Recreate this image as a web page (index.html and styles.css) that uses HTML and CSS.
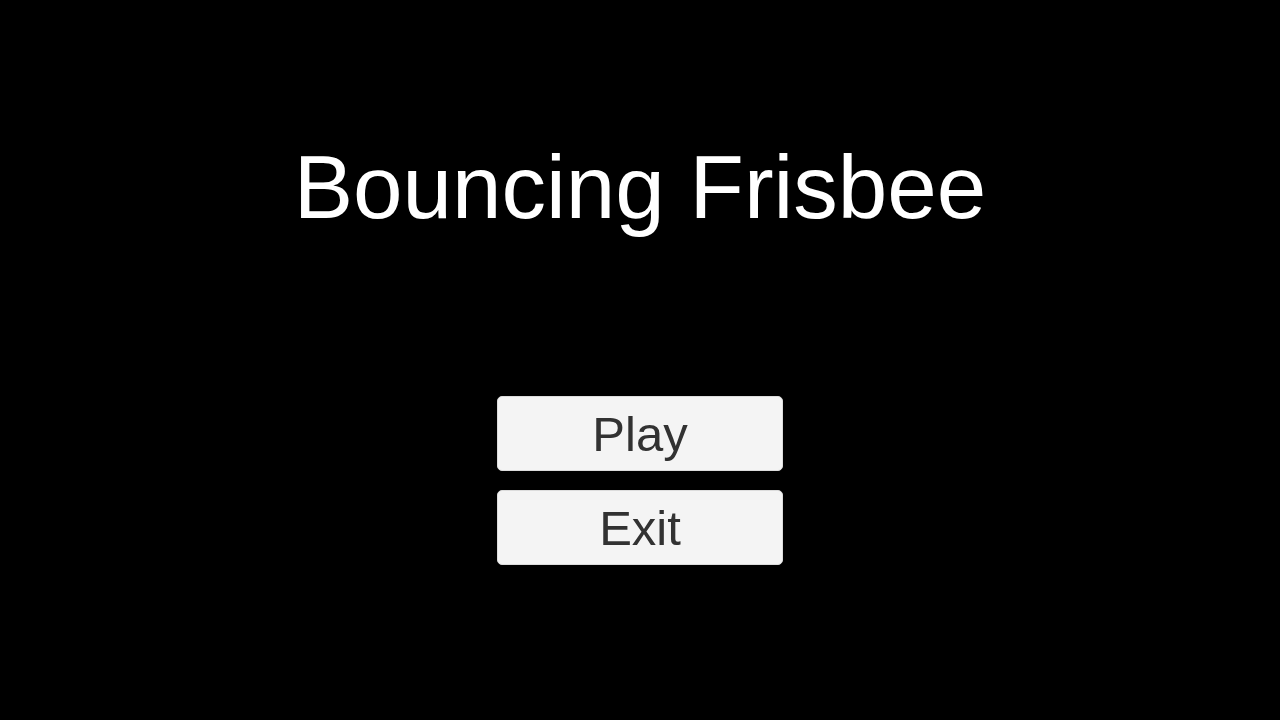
FILE: index.html
```html
<!DOCTYPE html>
<html>
<head>
<meta charset="utf-8">
<link rel="stylesheet" href="styles.css">
</head>
<body>
<main class="menu">
  <h1 class="title">Bouncing Frisbee</h1>
  <div class="buttons">
    <button class="btn">Play</button>
    <button class="btn">Exit</button>
  </div>
</main>
</body>
</html>
```
FILE: styles.css
```css
html, body {
  margin: 0;
  padding: 0;
  background: #000;
  width: 1280px;
  height: 720px;
  overflow: hidden;
}
.menu {
  display: flex;
  flex-direction: column;
  align-items: center;
  padding-top: 137px;
  font-family: "Liberation Sans", Arial, sans-serif;
}
.title {
  margin: 0;
  font-size: 89px;
  line-height: 100px;
  font-weight: normal;
  color: #fff;
}
.buttons {
  margin-top: 159px;
  display: flex;
  flex-direction: column;
  gap: 19px;
}
.btn {
  box-sizing: border-box;
  width: 286px;
  height: 75px;
  padding: 0;
  background: #f4f4f4;
  border: 1px solid #dcdcdc;
  border-radius: 5px;
  color: #323232;
  font-family: "Liberation Sans", Arial, sans-serif;
  font-size: 49px;
  line-height: 72px;
}
```
